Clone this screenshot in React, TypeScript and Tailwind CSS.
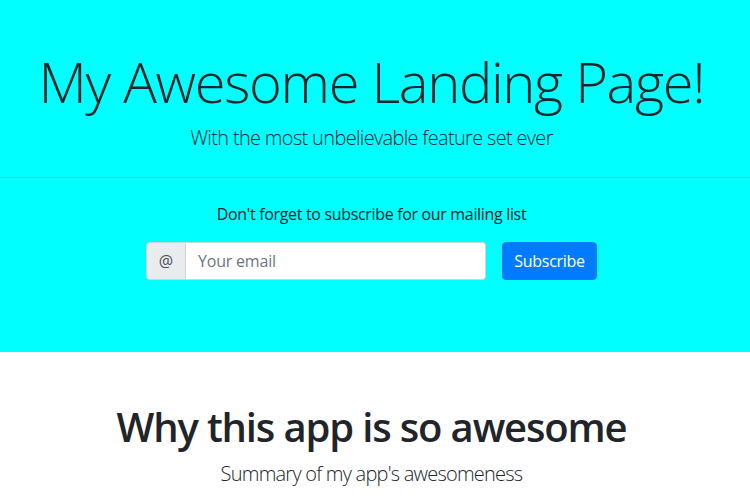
import React from "react";

export default function App() {
  return (
    <div className="min-h-[500px] bg-white text-[#212529]" style={{ fontFamily: '"Open Sans", "Noto Sans", sans-serif' }}>
      <section className="bg-[#00ffff] pt-[48px] pb-[72px] pr-[7px] text-center">
        <h1 className="text-[56px] leading-[67px] font-light tracking-[-1.3px] mb-[8px]">My Awesome Landing Page!</h1>
        <p className="text-[20px] leading-[30px] font-light tracking-[-0.67px]">With the most unbelievable feature set ever</p>
        <hr className="my-[24px] mr-[-7px] border-0 border-t border-[rgba(0,0,0,0.1)]" />
        <p className="text-[16px] leading-[24px] tracking-[-0.33px] mb-[16px]">Don't forget to subscribe for our mailing list</p>
        <form className="flex justify-center items-center gap-[16px]" onSubmit={(e) => e.preventDefault()}>
          <div className="flex h-[38px] w-[340px]">
            <span className="flex items-center justify-center w-[40px] bg-[#e9ecef] border border-[#ced4da] rounded-l-[4px] text-[16px] text-[#495057]">@</span>
            <input
              type="email"
              placeholder="Your email"
              className="flex-1 min-w-0 bg-white border border-l-0 border-[#ced4da] rounded-r-[4px] px-[12px] text-[16px] tracking-[-0.2px] text-[#495057] placeholder:text-[#6c757d] outline-none"
            />
          </div>
          <button type="submit" className="h-[38px] w-[95px] bg-[#007bff] text-white text-[16px] tracking-[-0.3px] rounded-[4px] border border-[#007bff]">Subscribe</button>
        </form>
      </section>
      <section className="pt-[51px] pr-[7px] text-center">
        <h2 className="text-[40px] leading-[48px] font-semibold tracking-[-1.15px] mb-[8px]">Why this app is so awesome</h2>
        <p className="text-[20px] leading-[30px] font-light tracking-[-0.77px]">Summary of my app's awesomeness</p>
      </section>
    </div>
  );
}
